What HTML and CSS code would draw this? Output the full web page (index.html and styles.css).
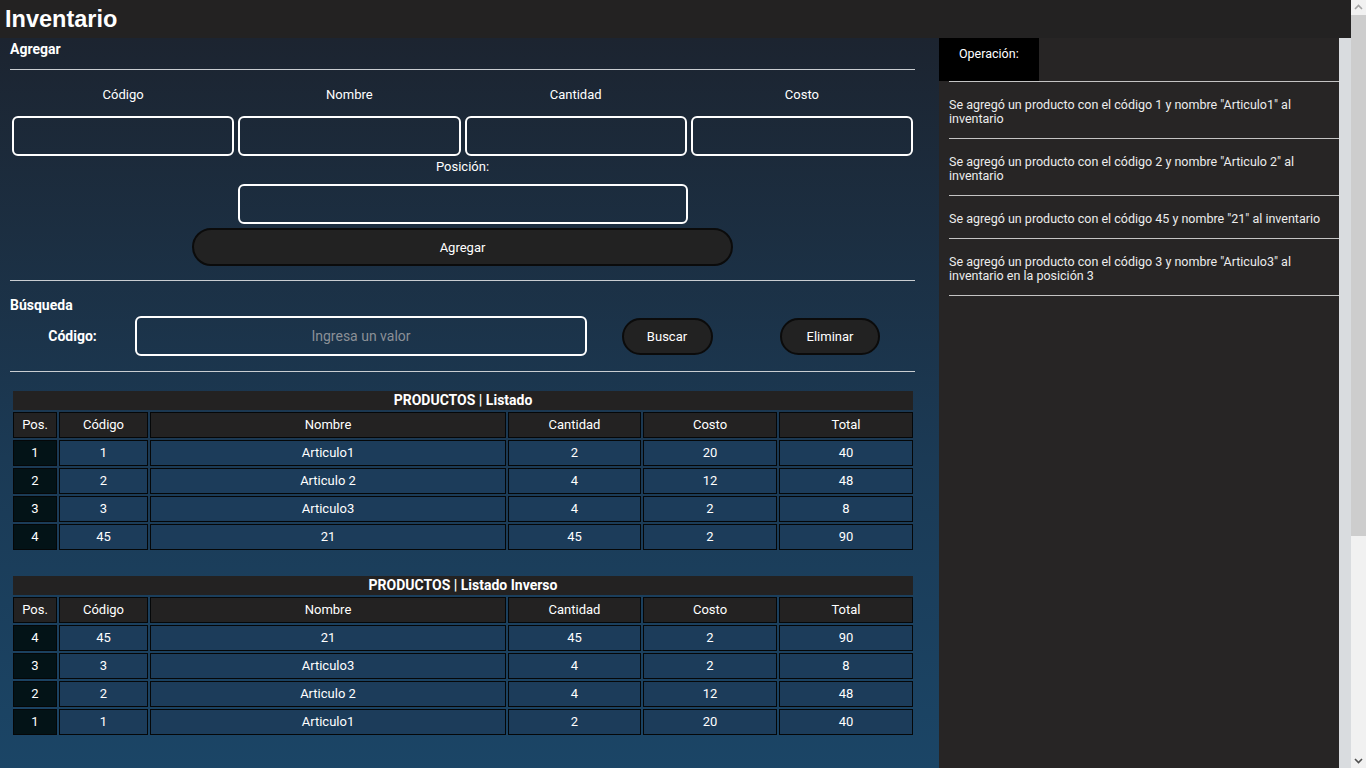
FILE: index.html
```html
<!DOCTYPE html>
<html lang="es">
<head>
<meta charset="utf-8">
<title>Inventario</title>
<link rel="stylesheet" href="styles.css">
</head>
<body>
<header class="topbar"><h1 class="title">Inventario</h1></header>
<div class="layout">
  <main class="main">
    <h3 class="section-title">Agregar</h3>
    <hr class="divider">
    <div class="add-grid">
      <label class="field-label">Código</label>
      <label class="field-label">Nombre</label>
      <label class="field-label">Cantidad</label>
      <label class="field-label">Costo</label>
      <input class="field" type="text">
      <input class="field" type="text">
      <input class="field" type="text">
      <input class="field" type="text">
    </div>
    <div class="pos-block">
      <label class="field-label pos-label">Posición:</label>
      <input class="field pos-field" type="text">
      <button class="btn btn-wide">Agregar</button>
    </div>
    <hr class="divider divider-2">
    <h3 class="section-title search-title">Búsqueda</h3>
    <div class="search-row">
      <span class="search-label">Código:</span>
      <input class="field search-field" type="text" placeholder="Ingresa un valor">
      <div class="btn-cell"><button class="btn btn-small btn-buscar">Buscar</button></div>
      <div class="btn-cell"><button class="btn btn-small btn-eliminar">Eliminar</button></div>
    </div>
    <hr class="divider divider-3">

    <table class="grid-table">
      <colgroup><col class="c-pos"><col class="c-cod"><col class="c-nom"><col class="c-can"><col class="c-cos"><col class="c-tot"></colgroup>
      <tr><th class="tbl-title" colspan="6">PRODUCTOS | Listado</th></tr>
      <tr><th>Pos.</th><th>Código</th><th>Nombre</th><th>Cantidad</th><th>Costo</th><th>Total</th></tr>
      <tr><td class="pos">1</td><td>1</td><td>Articulo1</td><td>2</td><td>20</td><td>40</td></tr>
      <tr><td class="pos">2</td><td>2</td><td>Articulo 2</td><td>4</td><td>12</td><td>48</td></tr>
      <tr><td class="pos">3</td><td>3</td><td>Articulo3</td><td>4</td><td>2</td><td>8</td></tr>
      <tr><td class="pos">4</td><td>45</td><td>21</td><td>45</td><td>2</td><td>90</td></tr>
    </table>

    <table class="grid-table table-2">
      <colgroup><col class="c-pos"><col class="c-cod"><col class="c-nom"><col class="c-can"><col class="c-cos"><col class="c-tot"></colgroup>
      <tr><th class="tbl-title" colspan="6">PRODUCTOS | Listado Inverso</th></tr>
      <tr><th>Pos.</th><th>Código</th><th>Nombre</th><th>Cantidad</th><th>Costo</th><th>Total</th></tr>
      <tr><td class="pos">4</td><td>45</td><td>21</td><td>45</td><td>2</td><td>90</td></tr>
      <tr><td class="pos">3</td><td>3</td><td>Articulo3</td><td>4</td><td>2</td><td>8</td></tr>
      <tr><td class="pos">2</td><td>2</td><td>Articulo 2</td><td>4</td><td>12</td><td>48</td></tr>
      <tr><td class="pos">1</td><td>1</td><td>Articulo1</td><td>2</td><td>20</td><td>40</td></tr>
    </table>
  </main>
  <aside class="log">
    <div class="log-tab">Operación:</div>
    <ul class="log-list">
      <li class="log-item">Se agregó un producto con el código 1 y nombre "Articulo1" al inventario</li>
      <li class="log-item">Se agregó un producto con el código 2 y nombre "Articulo 2" al inventario</li>
      <li class="log-item">Se agregó un producto con el código 45 y nombre "21" al inventario</li>
      <li class="log-item">Se agregó un producto con el código 3 y nombre "Articulo3" al inventario en la posición 3</li>
    </ul>
  </aside>
</div>
<div class="scrollbar" aria-hidden="true">
  <div class="sb-btn">
    <svg width="15" height="14" viewBox="0 0 15 14"><polyline points="4,9 7.5,5.5 11,9" fill="none" stroke="#a3a3a3" stroke-width="1.6"/></svg>
  </div>
  <div class="sb-thumb"></div>
  <div class="sb-track"></div>
  <div class="sb-btn">
    <svg width="15" height="14" viewBox="0 0 15 14"><polyline points="4,5 7.5,8.5 11,5" fill="none" stroke="#505050" stroke-width="1.6"/></svg>
  </div>
</div>
</body>
</html>
```

FILE: styles.css
```css
* { box-sizing: border-box; }

html, body {
  margin: 0;
  padding: 0;
}

body {
  background: #d9dcdf;
  font-family: Roboto, "Noto Sans", sans-serif;
  font-size: 13px;
  color: #f2f2f2;
}

.topbar {
  height: 38px;
  background: #232222;
  padding-left: 5px;
}

.title {
  margin: 0;
  font-family: "Liberation Sans", Arial, sans-serif;
  font-size: 23.5px;
  font-weight: bold;
  line-height: 38px;
  color: #ffffff;
}

.layout {
  display: flex;
  align-items: stretch;
}

.main {
  width: 939px;
  flex: none;
  min-height: 1053px;
  padding: 1px 24px 0 10px;
  background: linear-gradient(180deg, #1c2430 0px, #1b3a55 420px, #1b4566 730px, #1b4c70 1053px);
}

.section-title {
  margin: 0;
  font-size: 14px;
  font-weight: 700;
  line-height: 20px;
  color: #ffffff;
}

.divider {
  border: 0;
  border-top: 1px solid #c9cdd1;
  margin: 10px 0 0;
  height: 0;
}

.add-grid {
  display: grid;
  grid-template-columns: repeat(4, 1fr);
  margin-top: 15px;
  row-gap: 11px;
}

.field-label {
  text-align: center;
  line-height: 20px;
  font-size: 13px;
  color: #ffffff;
}

.field {
  height: 40px;
  width: calc(100% - 4px);
  margin: 0 auto;
  background: transparent;
  border: 2px solid #ffffff;
  border-radius: 6px;
  color: #fff;
  font-family: inherit;
  font-size: 14px;
  text-align: center;
  outline: none;
}

.pos-block {
  display: flex;
  flex-direction: column;
  align-items: center;
  margin-top: 1px;
}

.pos-label { display: block; }

.pos-field {
  width: 450px;
  margin-top: 7px;
}

.btn {
  background: #222222;
  color: #ffffff;
  border: 2px solid #0b0b0b;
  border-radius: 20px;
  font-family: inherit;
  font-size: 13px;
  cursor: pointer;
}

.btn-wide {
  width: 541px;
  height: 38px;
  margin-top: 4px;
}

.divider-2 { margin-top: 14px; }

.search-title { margin-top: 14px; }

.search-row {
  display: grid;
  grid-template-columns: 125px 452px 1fr 1fr;
  align-items: center;
  margin-top: 1px;
}

.search-label {
  text-align: center;
  font-size: 14px;
  font-weight: 700;
  color: #ffffff;
}

.search-field {
  width: 100%;
  margin: 0;
}

.search-field::placeholder {
  color: #8b9097;
}

.btn-cell {
  display: flex;
  justify-content: center;
}

.btn-small {
  height: 37px;
}

.btn-buscar {
  width: 91px;
  margin-left: -4px;
}

.btn-eliminar {
  width: 100px;
  margin-left: -6px;
}

.divider-3 { margin-top: 15px; }

.grid-table {
  width: 904px;
  margin-top: 17px;
  margin-left: 1px;
  border-spacing: 2px;
  table-layout: fixed;
}

.table-2 { margin-top: 22px; }

.c-pos { width: 44px; }
.c-cod { width: 89px; }
.c-nom { width: 356px; }
.c-can { width: 133px; }
.c-cos { width: 134px; }
.c-tot { width: 134px; }

.grid-table th,
.grid-table td {
  height: 26px;
  padding: 0;
  text-align: center;
  font-size: 13px;
  font-weight: 400;
  line-height: 16px;
  color: #ffffff;
  border: 1px solid #050708;
}

.grid-table th {
  background: #232222;
}

.grid-table td {
  background: #1c3c5a;
}

.grid-table td.pos {
  background: #031317;
}

.grid-table th.tbl-title {
  height: 19px;
  line-height: 19px;
  border: 0;
  font-size: 14px;
  font-weight: 700;
  background: #232222;
}

.log {
  width: 400px;
  flex: none;
  background: #272525;
}

.log-tab {
  width: 100px;
  height: 43px;
  background: #000000;
  padding: 8px 0 0 20px;
  font-size: 12.5px;
  line-height: 16px;
  color: #ffffff;
}

.log-list {
  list-style: none;
  margin: 0 0 0 10px;
  padding: 0;
  border-top: 1px solid #c4c4c4;
}

.log-item {
  padding: 16px 0 12px 0;
  border-bottom: 1px solid #c4c4c4;
  font-size: 12.5px;
  line-height: 14px;
  color: #ececec;
}

.scrollbar {
  position: fixed;
  top: 0;
  right: 0;
  width: 15px;
  height: 100vh;
  display: flex;
  flex-direction: column;
  background: #f1f1f1;
}

.sb-btn {
  height: 14px;
  flex: none;
  display: flex;
}

.sb-thumb {
  height: 521px;
  flex: none;
  margin-top: 1px;
  background: #cdcdcd;
}

.sb-track {
  flex: 1;
}
```
